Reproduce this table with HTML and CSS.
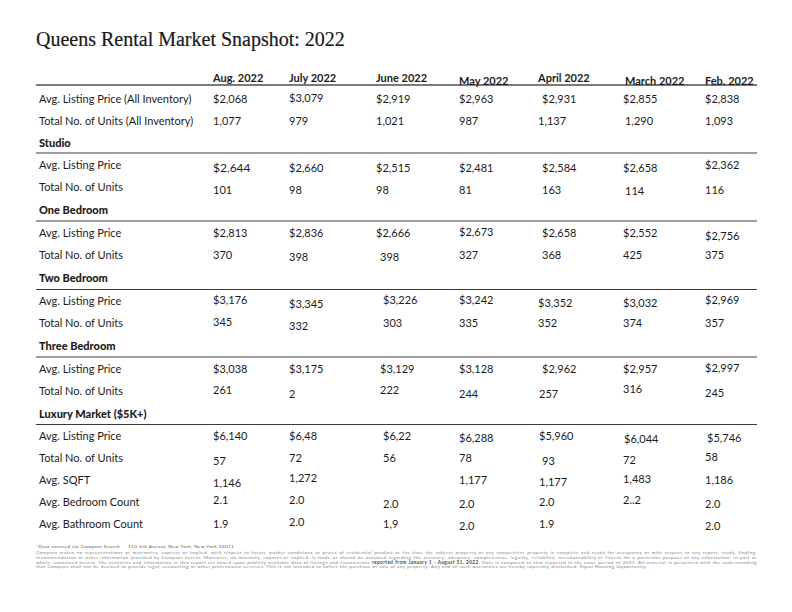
FILE: index.html
```html
<!DOCTYPE html>
<html>
<head>
<meta charset="utf-8">
<link rel="stylesheet" href="styles.css">
</head>
<body>
<div class="page">
  <h1 class="title">Queens Rental Market Snapshot: 2022</h1>

  <div class="row head">
    <div></div>
    <div>Aug. 2022</div>
    <div>July 2022</div>
    <div>June 2022</div>
    <div class="lo">May 2022</div>
    <div>April 2022</div>
    <div class="lo">March 2022</div>
    <div class="lo">Feb. 2022</div>
  </div>

  <div class="row first">
    <div class="lbl">Avg. Listing Price (All Inventory)</div>
    <div>$2,068</div><div class="hi1">$3,079</div><div>$2,919</div><div>$2,963</div><div class="r3">$2,931</div><div>$2,855</div><div>$2,838</div>
  </div>
  <div class="row">
    <div class="lbl">Total No. of Units (All Inventory)</div>
    <div>1,077</div><div>979</div><div>1,021</div><div>987</div><div>1,137</div><div class="r2">1,290</div><div>1,093</div>
  </div>

  <div class="sec sec-studio"><span>Studio</span></div>
  <div class="row">
    <div class="lbl">Avg. Listing Price</div>
    <div class="lo big">$2,644</div><div class="lo">$2,660</div><div class="lo">$2,515</div><div class="lo">$2,481</div><div class="lo r3">$2,584</div><div class="lo">$2,658</div><div>$2,362</div>
  </div>
  <div class="row">
    <div class="lbl">Total No. of Units</div>
    <div class="lo">101</div><div class="lo">98</div><div class="lo">98</div><div class="lo">81</div><div class="lo r3">163</div><div class="lo2 r2">114</div><div class="lo">116</div>
  </div>

  <div class="sec"><span>One Bedroom</span></div>
  <div class="row">
    <div class="lbl">Avg. Listing Price</div>
    <div>$2,813</div><div>$2,836</div><div>$2,666</div><div class="hi1">$2,673</div><div class="r3">$2,658</div><div>$2,552</div><div class="lo">$2,756</div>
  </div>
  <div class="row">
    <div class="lbl">Total No. of Units</div>
    <div>370</div><div class="lo1">398</div><div class="lo1 r3">398</div><div>327</div><div class="r3">368</div><div>425</div><div>375</div>
  </div>

  <div class="sec sec-dark"><span>Two Bedroom</span></div>
  <div class="row">
    <div class="lbl">Avg. Listing Price</div>
    <div class="hi1">$3,176</div><div class="lo">$3,345</div><div class="r6 hi1">$3,226</div><div class="hi1">$3,242</div><div class="lo1">$3,352</div><div class="lo1">$3,032</div><div class="hi1">$2,969</div>
  </div>
  <div class="row">
    <div class="lbl">Total No. of Units</div>
    <div class="hi1">345</div><div class="lo">332</div><div class="r6">303</div><div>335</div><div>352</div><div>374</div><div>357</div>
  </div>

  <div class="sec"><span>Three Bedroom</span></div>
  <div class="row">
    <div class="lbl">Avg. Listing Price</div>
    <div>$3,038</div><div>$3,175</div><div class="r3">$3,129</div><div>$3,128</div><div class="r3">$2,962</div><div>$2,957</div><div class="hi1">$2,997</div>
  </div>
  <div class="row">
    <div class="lbl">Total No. of Units</div>
    <div class="hi1">261</div><div class="lo">2</div><div class="r3 hi1">222</div><div class="lo">244</div><div class="lo r1">257</div><div class="hi">316</div><div class="lo1">245</div>
  </div>

  <div class="sec sec-dark sec-lux"><span>Luxury Market ($5K+)</span></div>
  <div class="row">
    <div class="lbl">Avg. Listing Price</div>
    <div>$6,140</div><div>$6,48</div><div class="r6">$6,22</div><div class="lo1">$6,288</div><div class="r1">$5,960</div><div class="lo r1">$6,044</div><div class="lo1 r2">$5,746</div>
  </div>
  <div class="row">
    <div class="lbl">Total No. of Units</div>
    <div class="lo">57</div><div>72</div><div class="r6">56</div><div>78</div><div class="lo r3">93</div><div class="lo1">72</div><div class="hi1">58</div>
  </div>
  <div class="row">
    <div class="lbl">Avg. SQFT</div>
    <div class="lo">1,146</div><div class="hi">1,272</div><div class="r6"></div><div>1,177</div><div class="lo1 r1">1,177</div><div class="hi1">1,483</div><div>1,186</div>
  </div>
  <div class="row">
    <div class="lbl">Avg. Bedroom Count</div>
    <div class="hi">2.1</div><div class="hi">2.0</div><div class="r6 lo1">2.0</div><div class="lo1">2.0</div><div class="r1">2.0</div><div class="hi">2..2</div><div class="lo1">2.0</div>
  </div>
  <div class="row">
    <div class="lbl">Avg. Bathroom Count</div>
    <div>1.9</div><div class="hi">2.0</div><div class="r6">1,9</div><div class="lo1">2.0</div><div class="r1">1.9</div><div></div><div class="lo1">2.0</div>
  </div>

  <div class="foot">
    <p class="src">*Data sourced via Compass Search<span class="addr">110 5th Avenue New York, New York 10011</span></p>
    <p class="disc">
      <span class="ln">Compass makes no representations or warranties, express or implied, with respect to future market conditions or prices of residential product at the time the subject property or any competitive property is complete and ready for occupancy or with respect to any report, study, finding,</span>
      <span class="ln">recommendation or other information provided by Compass herein. Moreover, no warranty, express or implied, is made or should be assumed regarding the accuracy, adequacy, completeness, legality, reliability, merchantability or fitness for a particular purpose of any information, in part or</span>
      <span class="ln">whole, contained herein. The statistics and information in this report are based upon publicly available data of listings and transactions <b>reported from January 1 - August 31, 2022</b>. Data is compared to that reported in the same period of 2021. All material is presented with the understanding</span>
      <span class="last">that Compass shall not be deemed to provide legal, accounting or other professional services. This is not intended to solicit the purchase or sale of any property. Any and all such warranties are hereby expressly disclaimed. Equal Housing Opportunity.</span>
    </p>
  </div>
</div>
</body>
</html>
```

FILE: styles.css
```css
* { box-sizing: border-box; }
html, body { margin: 0; padding: 0; background: #fff; }
body {
  font-family: "Lato", "Liberation Sans", sans-serif;
  color: #1c1c1c;
  width: 792px;
  height: 612px;
  overflow: hidden;
}
.page {
  padding: 26px 35px 0 36px;
}
.title {
  margin: 0;
  font-family: "Liberation Serif", "DejaVu Serif", serif;
  font-weight: normal;
  font-size: 20px;
  line-height: 26px;
  color: #1a1a1a;
  -webkit-text-stroke: 0.2px #1a1a1a;
}
.row {
  display: grid;
  grid-template-columns: 177px 76px 87px 83px 79px 85px 82px 52px;
  height: 22px;
  align-items: center;
  font-size: 11px;
  white-space: nowrap;
}
.row > div { line-height: 12px; }
.lbl { padding-left: 3px; }
.head {
  margin-top: 15px;
  height: 19px;
  border-bottom: 2px solid #7a7a7a;
  font-weight: bold;
  align-items: start;
}
.head > div { padding-top: 5px; }
.head > div:nth-child(7) { padding-left: 2px; }
.head > .lo { padding-top: 8px; }
.first { margin-top: 2px; }
.sec {
  height: 24px;
  border-bottom: 2px solid #9c9c9c;
  font-size: 11px;
  font-weight: 900;
  padding-left: 3px;
  display: flex;
  align-items: center;
}
.sec-studio { height: 22px; }
.sec-dark { border-bottom: 1px solid #3a3a3a; }
.sec-lux { height: 23px; }
.lo { padding-top: 5px; }
.lo1 { padding-top: 3px; }
.lo2 { padding-top: 7px; }
.hi { padding-bottom: 4px; }
.hi1 { padding-bottom: 2px; }
.r1 { padding-left: 1px; }
.r2 { padding-left: 2px; }
.r3 { padding-left: 4px; }
.r6 { padding-left: 7px; }
.big { font-size: 12px; }
.foot {
  margin-top: 9px;
  font-size: 4.6px;
  line-height: 4.7px;
  letter-spacing: 0.45px;
  color: #808080;
  width: 721px;
}
.foot p { margin: 0; }
.src { color: #555; margin-bottom: 1.5px !important; }
.addr { margin-left: 8px; }
.disc .ln {
  display: block;
  text-align: justify;
  text-align-last: justify;
  white-space: nowrap;
}
.disc .last { display: block; white-space: nowrap; }
.disc b { color: #444; }
```
